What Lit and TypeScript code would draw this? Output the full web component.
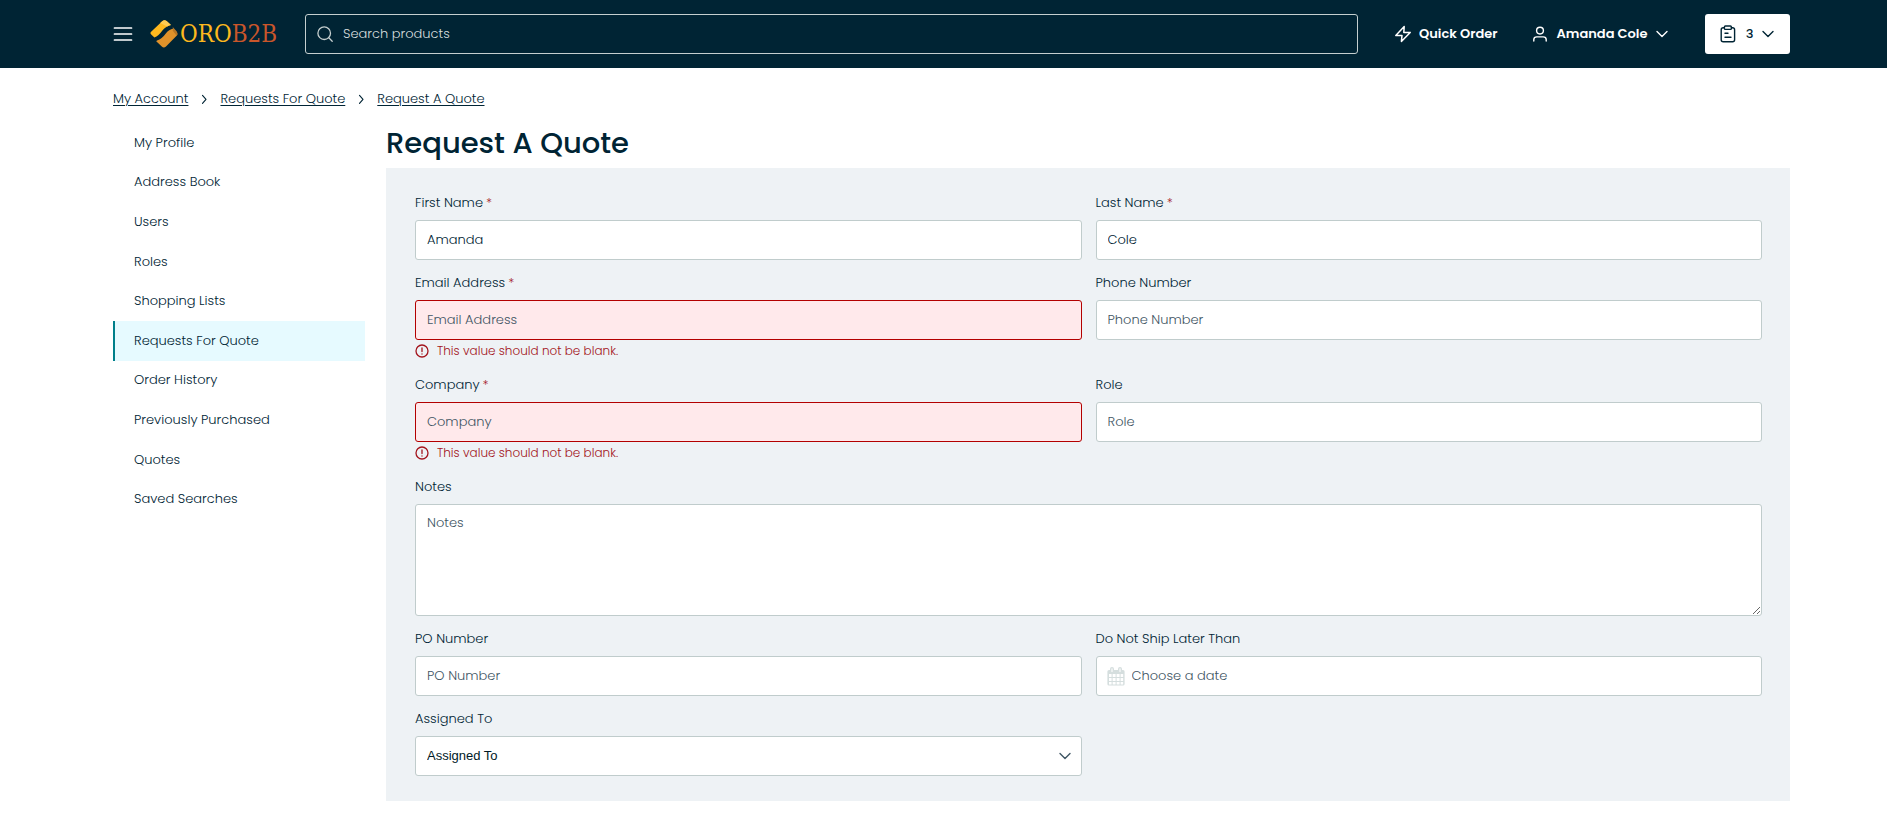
import { LitElement, html, css, svg, nothing } from "lit";
import { customElement, state } from "lit/decorators.js";
import { classMap } from "lit/directives/class-map.js";

interface Field {
  id: string;
  label: string;
  required?: boolean;
  value?: string;
  error?: string;
}

const NAV = [
  "My Profile",
  "Address Book",
  "Users",
  "Roles",
  "Shopping Lists",
  "Requests For Quote",
  "Order History",
  "Previously Purchased",
  "Quotes",
  "Saved Searches",
];

const CRUMBS = ["My Account", "Requests For Quote", "Request A Quote"];
const BLANK = "This value should not be blank.";

const CONTACT: Field[] = [
  { id: "first-name", label: "First Name", required: true, value: "Amanda" },
  { id: "last-name", label: "Last Name", required: true, value: "Cole" },
  { id: "email", label: "Email Address", required: true, error: BLANK },
  { id: "phone", label: "Phone Number" },
  { id: "company", label: "Company", required: true, error: BLANK },
  { id: "role", label: "Role" },
];

const icon = (size: number, body: unknown, width = 1.5, box = 24) => html`
  <svg class="icon" width=${size} height=${size} viewBox="0 0 ${box} ${box}" fill="none"
    stroke="currentColor" stroke-width=${width} stroke-linecap="round" stroke-linejoin="round"
    aria-hidden="true">${body}</svg>`;

const chevronDown = icon(12, svg`<path d="M1 3.5 L6 8.5 L11 3.5" />`, 1.4, 12);
const chevronRight = icon(12, svg`<path d="M4.5 2.3 L8 6.3 L4.5 10.3" />`, 1.1, 12);
const menuIcon = icon(20, svg`<path d="M1.5 4 H18.5 M1.5 10 H18.5 M1.5 16 H18.5" />`, 1.7, 20);
const searchIcon = icon(16, svg`<circle cx="7.2" cy="7.2" r="6.3" /><path d="M11.8 11.8 L15.2 15.2" />`, 1.3, 16);
const boltIcon = icon(18, svg`<path d="M10.2 1.6 L1.8 10.4 H8 L7.4 16.4 L16.2 7.4 H9.8 Z" />`, 1.5, 18);
const userIcon = icon(16, svg`<circle cx="8" cy="4.6" r="3.4" /><path d="M1.8 15 V13.6 C1.8 11.8 3 10.9 4.8 10.9 H11.2 C13 10.9 14.2 11.8 14.2 13.6 V15" />`, 1.4, 16);
const clipboardIcon = icon(
  18,
  svg`<path d="M5.4 2.7 H4.2 C3 2.7 2.2 3.5 2.2 4.7 V14.8 C2.2 16 3 16.8 4.2 16.8 H13.6 C14.8 16.8 15.6 16 15.6 14.8 V4.7 C15.6 3.5 14.8 2.7 13.6 2.7 H12.4" />
    <rect x="5.4" y="1" width="7" height="3.4" rx="1" /><path d="M6 8.2 H9 M6 12.2 H12" />`,
  1.4,
  18,
);
const alertIcon = icon(14, svg`<circle cx="7" cy="7" r="6" /><path d="M7 4 V7.6 M7 9.8 V10" />`, 1.3, 14);

const calendarIcon = html`
  <svg class="calendar" width="18" height="19" viewBox="0 0 18 19" aria-hidden="true">
    <path fill="#d5dede" d="M2 3 H3 V2 A2 2 0 0 1 7 2 V3 H11 V2 A2 2 0 0 1 15 2 V3 H16 A1.6 1.6 0 0 1 17.6 4.6 V17 A1.6 1.6 0 0 1 16 18.6 H2 A1.6 1.6 0 0 1 .4 17 V4.6 A1.6 1.6 0 0 1 2 3 Z" />
    <path stroke="#fff" stroke-width="1.1" stroke-linecap="round" d="M5 1.8 V4.4 M13 1.8 V4.4" />
    <path fill="#fff" d="M2 7 h2.6 v3 h-2.6z M5.6 7 h3 v3 h-3z M9.6 7 h3 v3 h-3z M13.6 7 h2.6 v3 h-2.6z M2 11 h2.6 v3 h-2.6z M5.6 11 h3 v3 h-3z M9.6 11 h3 v3 h-3z M13.6 11 h2.6 v3 h-2.6z M2 15 h2.6 v2.4 h-2.6z M5.6 15 h3 v2.4 h-3z M9.6 15 h3 v2.4 h-3z M13.6 15 h2.6 v2.4 h-2.6z" />
  </svg>`;

const logoMark = html`
  <svg class="icon" width="28" height="28" viewBox="0 0 28 28" aria-hidden="true">
    <path fill="#fdb81e" d="M12.2 1.2 Q14.4 -.6 16.6 1 L21 5 Q16 6 12.4 10.6 Q8.6 16 4.4 17.6 L1.2 14.6 Q-.4 13 1.4 11.4 Z" />
    <path fill="#fecb52" d="M12.2 1.2 Q14.4 -.6 16.6 1 L21 5 Q19 5.4 17.2 6.4 L10.2 3 Z" />
    <path fill="#e0922a" d="M7 20.4 Q12 19 15.4 14 Q19 9.4 23.4 8.6 L26.8 12.4 Q28 14.2 26.6 15.8 L16 26.6 Q13.8 28.4 11.8 26.6 L6.2 21.2 Z" />
    <path fill="#b97725" d="M21.4 5.4 L26.8 11.4 Q28.2 14 26.6 15.8 L22.6 10.4 Q24 7.6 21.4 5.4 Z" />
  </svg>`;

@customElement("app-root")
export class AppRoot extends LitElement {
  @state() private current = "Requests For Quote";

  static styles = css`
    :host {
      display: block;
      min-height: 100vh;
      background: #fff;
      color: #002434;
      font: 300 13px/20px Poppins, Inter, sans-serif;
    }
    * {
      box-sizing: border-box;
    }
    a {
      color: inherit;
    }
    button,
    input,
    textarea {
      font: inherit;
      color: inherit;
    }
    button {
      background: none;
      border: 0;
      padding: 0;
      cursor: pointer;
    }
    .icon {
      display: block;
      flex: none;
    }
    .header {
      display: flex;
      align-items: center;
      height: 68px;
      padding: 0 97px 0 113px;
      background: #002434;
      color: #fff;
    }
    .logo {
      display: flex;
      align-items: center;
      gap: 2px;
      width: 126px;
      margin: 0 29px 0 17px;
      text-decoration: none;
    }
    .wordmark {
      font: 24px/28px "DejaVu Serif Condensed", "DejaVu Serif", serif;
      color: #fdb81e;
      white-space: nowrap;
    }
    .wordmark-end {
      color: #c9562b;
    }
    .search {
      display: flex;
      flex: 1;
      align-items: center;
      gap: 10px;
      height: 40px;
      padding: 0 11px;
      border: 1px solid #c5cfcf;
      border-radius: 3px;
      color: #c5cfcf;
    }
    .search-input {
      flex: 1;
      min-width: 0;
      padding: 0;
      border: 0;
      outline: 0;
      background: none;
    }
    .search-input::placeholder {
      color: #d5dddd;
      opacity: 1;
    }
    .header-link {
      display: flex;
      align-items: center;
      gap: 7px;
      font-weight: 600;
      text-decoration: none;
      white-space: nowrap;
    }
    .quick {
      width: 103px;
      margin-left: 36px;
    }
    .account {
      justify-content: space-between;
      width: 136px;
      margin-left: 35px;
    }
    .lists {
      display: flex;
      align-items: center;
      justify-content: space-between;
      width: 85px;
      height: 40px;
      margin-left: 37px;
      padding: 0 16px 0 14px;
      border-radius: 3px;
      background: #fff;
      color: #002434;
      font-weight: 500;
    }
    .page {
      padding: 0 97px 31px 113px;
    }
    .crumbs {
      display: flex;
      gap: 10px;
      margin: 0;
      padding: 21px 0 14px;
      list-style: none;
    }
    .crumb {
      display: flex;
      align-items: center;
      gap: 10px;
    }
    .crumb-link {
      text-underline-offset: 2px;
    }
    .columns {
      display: grid;
      grid-template-columns: 252px minmax(0, 1fr);
      column-gap: 21px;
      align-items: start;
    }
    .nav {
      display: grid;
      grid-auto-rows: 1fr;
      height: 396px;
      margin: 0;
      padding: 0;
      list-style: none;
    }
    .nav-link {
      display: flex;
      align-items: center;
      height: 100%;
      padding-left: 19px;
      border-left: 2px solid transparent;
      text-decoration: none;
    }
    .nav-link.active {
      border-color: #007f8a;
      background: #e6faff;
    }
    .title {
      margin: 0;
      padding-bottom: 5px;
      font-size: 29px;
      line-height: 40px;
      font-weight: 500;
    }
    .panel {
      display: grid;
      grid-template-columns: repeat(2, minmax(0, 1fr));
      align-items: start;
      gap: 13px 14px;
      padding: 25px 28px 25px 29px;
      background: #eef2f5;
    }
    .field {
      display: flex;
      flex-direction: column;
    }
    .wide {
      grid-column: 1 / -1;
    }
    .label {
      margin-bottom: 7px;
    }
    .star {
      margin-left: 3px;
      color: #a3141c;
    }
    .control {
      width: 100%;
      height: 40px;
      padding: 0 11px;
      border: 1px solid #c0cccc;
      border-radius: 3px;
      background: #fff;
      outline: 0;
    }
    .control::placeholder,
    .date-input::placeholder {
      color: #3f5664;
      opacity: 1;
    }
    .control.invalid {
      border-color: #b30000;
      background: #ffe9eb;
    }
    .area {
      display: block;
      height: 112px;
      padding: 8px 11px;
      resize: vertical;
    }
    .date {
      display: flex;
      align-items: center;
      gap: 7px;
      padding: 0 10px;
    }
    .date-input {
      flex: 1;
      min-width: 0;
      padding: 0;
      border: 0;
      outline: 0;
      background: none;
    }
    .error {
      display: flex;
      align-items: center;
      gap: 8px;
      height: 22px;
      color: #a3141c;
      font-size: 12px;
    }
    .select-wrap {
      display: grid;
      align-items: center;
    }
    .select-wrap > * {
      grid-area: 1 / 1;
    }
    .select {
      appearance: none;
      color: #001a26;
      font: 13px/20px "Liberation Sans", Arial, sans-serif;
    }
    .select-arrow {
      justify-self: end;
      margin-right: 11px;
      color: #3f5664;
      pointer-events: none;
    }
  `;

  private label(f: Field) {
    return html`<label class="label" for=${f.id}>${f.label}${f.required
      ? html`<span class="star">*</span>`
      : nothing}</label>`;
  }

  private textField(f: Field) {
    return html`
      <div class="field">
        ${this.label(f)}
        <input id=${f.id} type="text" placeholder=${f.label} .value=${f.value ?? ""}
          class=${classMap({ control: true, invalid: !!f.error })}
          aria-invalid=${f.error ? "true" : "false"} />
        ${f.error ? html`<div class="error">${alertIcon}<span>${f.error}</span></div>` : nothing}
      </div>`;
  }

  private go(e: Event, name: string) {
    e.preventDefault();
    this.current = name;
  }

  render() {
    return html`
      <header class="header">
        <button class="menu" aria-label="Menu">${menuIcon}</button>
        <a class="logo" href="#">${logoMark}<span class="wordmark">ORO<span class="wordmark-end">B2B</span></span></a>
        <label class="search">
          ${searchIcon}
          <input class="search-input" type="text" placeholder="Search products" aria-label="Search products" />
        </label>
        <a class="header-link quick" href="#">${boltIcon}Quick Order</a>
        <button class="header-link account">${userIcon}<span>Amanda Cole</span>${chevronDown}</button>
        <button class="lists">${clipboardIcon}<span>3</span>${chevronDown}</button>
      </header>
      <div class="page">
        <ol class="crumbs">
          ${CRUMBS.map(
            (c, i) => html`<li class="crumb">${i ? chevronRight : nothing}<a class="crumb-link" href="#">${c}</a></li>`,
          )}
        </ol>
        <div class="columns">
          <nav aria-label="Account">
            <ul class="nav">
              ${NAV.map(
                (n) => html`<li>
                  <a href="#" class=${classMap({ "nav-link": true, active: n === this.current })}
                    @click=${(e: Event) => this.go(e, n)}>${n}</a>
                </li>`,
              )}
            </ul>
          </nav>
          <main>
            <h1 class="title">Request A Quote</h1>
            <form class="panel">
              ${CONTACT.map((f) => this.textField(f))}
              <div class="field wide">
                ${this.label({ id: "notes", label: "Notes" })}
                <textarea id="notes" class="control area" placeholder="Notes"></textarea>
              </div>
              ${this.textField({ id: "po", label: "PO Number" })}
              <div class="field">
                ${this.label({ id: "ship", label: "Do Not Ship Later Than" })}
                <div class="control date">
                  ${calendarIcon}<input id="ship" class="date-input" type="text" placeholder="Choose a date" />
                </div>
              </div>
              <div class="field">
                ${this.label({ id: "assigned", label: "Assigned To" })}
                <div class="select-wrap">
                  <select id="assigned" class="control select"><option>Assigned To</option></select>
                  <span class="select-arrow">${chevronDown}</span>
                </div>
              </div>
            </form>
          </main>
        </div>
      </div>`;
  }
}
